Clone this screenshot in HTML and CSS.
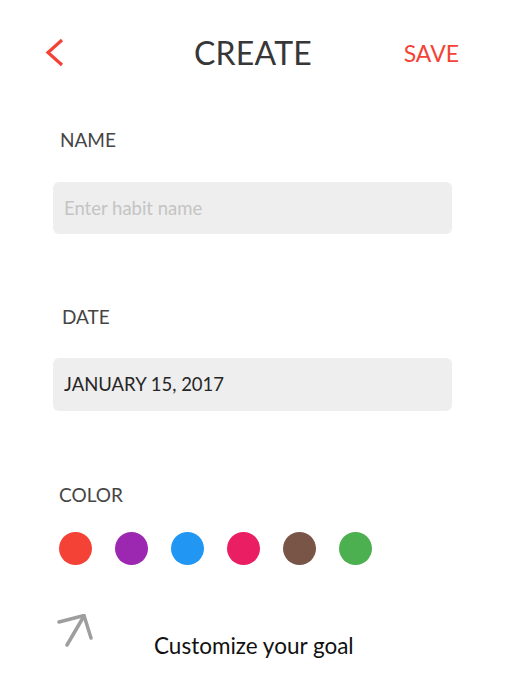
FILE: index.html
```html
<!DOCTYPE html>
<html>
<head>
<meta charset="utf-8">
<link rel="stylesheet" href="styles.css">
</head>
<body>
<div class="screen">
  <header class="topbar">
    <div class="back">
      <svg width="22" height="30" viewBox="0 0 22 30"><polyline points="18,2 4,14.5 18,27" fill="none" stroke="#f44336" stroke-width="3.2"/></svg>
    </div>
    <h1 class="title">CREATE</h1>
    <div class="save">SAVE</div>
  </header>
  <main class="form">
    <div class="label label-name">NAME</div>
    <div class="field placeholder">Enter habit name</div>
    <div class="label label-date">DATE</div>
    <div class="field value">JANUARY 15, 2017</div>
    <div class="label label-color">COLOR</div>
    <div class="swatches">
      <span class="dot red"></span>
      <span class="dot purple"></span>
      <span class="dot blue"></span>
      <span class="dot pink"></span>
      <span class="dot brown"></span>
      <span class="dot green"></span>
    </div>
    <div class="goal">
      <svg class="arrow" width="36" height="36" viewBox="0 0 36 36"><g fill="none" stroke="#9e9e9e" stroke-width="3.5" stroke-linecap="round" stroke-linejoin="round"><line x1="10" y1="31" x2="27" y2="2"/><polyline points="2,8 27,1.5 34,24"/></g></svg>
      <span class="goal-text">Customize your goal</span>
    </div>
  </main>
</div>
</body>
</html>
```
FILE: styles.css
```css
* { box-sizing: border-box; }
html, body { margin: 0; padding: 0; background: #fff; }
body { font-family: Lato, "Noto Sans", sans-serif; width: 516px; height: 692px; overflow: hidden; }
.screen { display: flex; flex-direction: column; }
.topbar {
  display: grid;
  grid-template-columns: 1fr auto 1fr;
  align-items: center;
  padding: 36px 57px 0 44px;
  height: 69px;
}
.back { display: flex; align-items: center; height: 32px; }
.back svg { display: block; }
.title {
  margin: 0;
  font-size: 32px;
  line-height: 32px;
  font-weight: 400;
  color: #373737;
  letter-spacing: 0.2px;
  padding-left: 3px;
}
.save {
  justify-self: end;
  font-size: 23px;
  line-height: 32px;
  color: #f44336;
}
.form { display: flex; flex-direction: column; padding: 0 64px 0 53px; }
.label {
  font-size: 19px;
  line-height: 19px;
  color: #454545;
  padding-left: 7px;
}
.label-name { margin-top: 61px; }
.label-date { margin-top: 73px; padding-left: 9px; }
.label-color { margin-top: 74px; padding-left: 6px; }
.field {
  margin-top: 33px;
  height: 52px;
  background: #eeeeee;
  border-radius: 6px;
  display: flex;
  align-items: center;
  padding-left: 11px;
  font-size: 18.5px;
  line-height: 19px;
}
.value { margin-top: 32px; height: 53px; color: #262626; }
.placeholder { color: #c4c4c4; }
.swatches { display: flex; gap: 23px; margin-top: 28px; padding-left: 6px; }
.dot { width: 33px; height: 33px; border-radius: 50%; display: block; }
.red { background: #f44336; }
.purple { background: #9c27b0; }
.blue { background: #2196f3; }
.pink { background: #e91e63; }
.brown { background: #795548; }
.green { background: #4caf50; }
.goal { display: flex; align-items: flex-start; margin-top: 49px; padding-left: 4px; }
.arrow { display: block; flex: none; }
.goal-text {
  margin-left: 61px;
  margin-top: 21px;
  font-size: 22.5px;
  line-height: 22px;
  color: #111;
}
```
